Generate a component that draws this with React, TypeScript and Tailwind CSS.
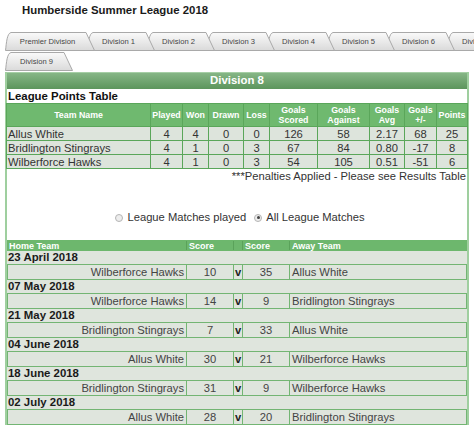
import React from "react";

const tabsTop = [
  { label: "Premier Division", w: 90, cls: "w-[90px] z-[9]" },
  { label: "Division 1", w: 68, cls: "w-[68px] -ml-[8px] z-[8]" },
  { label: "Division 2", w: 68, cls: "w-[68px] -ml-[8px] z-[7]" },
  { label: "Division 3", w: 68, cls: "w-[68px] -ml-[8px] z-[6]" },
  { label: "Division 4", w: 68, cls: "w-[68px] -ml-[8px] z-[5]" },
  { label: "Division 5", w: 68, cls: "w-[68px] -ml-[8px] z-[4]" },
  { label: "Division 6", w: 68, cls: "w-[68px] -ml-[8px] z-[3]" },
  { label: "Division 7", w: 68, cls: "w-[68px] -ml-[8px] z-[2]" },
];

const standings = [
  ["Allus White", 4, 4, 0, 0, 126, 58, "2.17", 68, 25],
  ["Bridlington Stingrays", 4, 1, 0, 3, 67, 84, "0.80", -17, 8],
  ["Wilberforce Hawks", 4, 1, 0, 3, 54, 105, "0.51", -51, 6],
];

const fixtures = [
  { date: "23 April 2018", home: "Wilberforce Hawks", hs: 10, as: 35, away: "Allus White" },
  { date: "07 May 2018", home: "Wilberforce Hawks", hs: 14, as: 9, away: "Bridlington Stingrays" },
  { date: "21 May 2018", home: "Bridlington Stingrays", hs: 7, as: 33, away: "Allus White" },
  { date: "04 June 2018", home: "Allus White", hs: 30, as: 21, away: "Wilberforce Hawks" },
  { date: "18 June 2018", home: "Bridlington Stingrays", hs: 31, as: 9, away: "Wilberforce Hawks" },
  { date: "02 July 2018", home: "Allus White", hs: 28, as: 20, away: "Bridlington Stingrays" },
];

const Tab = ({ label, w, cls, id }: { label: string; w: number; cls: string; id: string }) => (
  <div className={`relative shrink-0 h-[19px] flex items-center justify-center pr-[5px] ${cls}`}>
    <svg className="absolute left-0 top-0" width={w} height={19}>
      <defs>
        <linearGradient id={id} x1="0" y1="0" x2="0" y2="1">
          <stop offset="0" stopColor="#fafafa" />
          <stop offset="1" stopColor="#dadada" />
        </linearGradient>
      </defs>
      <path
        d={`M0.5,18.5 C1.5,10 2,1.5 6,0.5 L${w - 9},0.5 L${w - 0.5},18.5 Z`}
        fill={`url(#${id})`}
        stroke="#a9a9a9"
      />
    </svg>
    <span className="relative text-[7.6px] text-[#444] whitespace-nowrap">{label}</span>
  </div>
);

const th = "border border-[#5aa65a] px-0 font-bold text-white text-[8.8px] leading-[10px] text-center align-middle";
const td = "border border-[#5aa65a] h-[14px] p-0 leading-[12px] text-center";

export default function App() {
  return (
    <div className="w-[474px] h-[431px] overflow-hidden bg-white font-['Liberation_Sans',Arial,sans-serif] text-[#333]">
      <div className="h-[32px] pt-[4px] pl-[22px]">
        <h1 className="text-[11.4px] leading-[13px] font-bold text-[#1a1a1a]">Humberside Summer League 2018</h1>
      </div>

      {/* division tabs */}
      <div className="flex pl-[5px] overflow-hidden">
        {tabsTop.map((t, i) => (
          <Tab key={t.label} label={t.label} w={t.w} cls={t.cls} id={`tabg${i}`} />
        ))}
      </div>
      <div className="flex pl-[5px] mt-px">
        <Tab label="Division 9" w={68} cls="w-[68px]" id="tabg9" />
      </div>

      <div className="ml-[5px] w-[464px] border-x-2 border-[#9fcf9f] mt-[1px]">
        <div className="h-[17px] bg-linear-to-b from-[#86b686] to-[#5c955c] border-t border-[#a6cfa6] text-center text-white font-bold text-[11.4px] leading-[15px]">
          Division 8
        </div>

        <div className="h-[14px] pl-[1px] text-[11.4px] leading-[14px] font-bold text-[#111]">League Points Table</div>

        <table className="table-fixed border-collapse w-[461px] -ml-px text-[11.2px]">
          <colgroup>
            <col className="w-[144px]" />
            <col className="w-[32px]" />
            <col className="w-[26px]" />
            <col className="w-[35px]" />
            <col className="w-[26px]" />
            <col className="w-[48px]" />
            <col className="w-[52px]" />
            <col className="w-[35px]" />
            <col className="w-[32px]" />
            <col className="w-[31px]" />
          </colgroup>
          <thead>
            <tr className="h-[23px] bg-[#6fb96f]">
              <th className={th}>Team Name</th>
              <th className={th}>Played</th>
              <th className={th}>Won</th>
              <th className={th}>Drawn</th>
              <th className={th}>Loss</th>
              <th className={th}>Goals<br />Scored</th>
              <th className={th}>Goals<br />Against</th>
              <th className={th}>Goals<br />Avg</th>
              <th className={th}>Goals<br />+/-</th>
              <th className={th}>Points</th>
            </tr>
          </thead>
          <tbody>
            {standings.map((row) => (
              <tr key={row[0] as string} className="bg-[#dde4dc]">
                {row.map((c, j) => (
                  <td key={j} className={j === 0 ? `${td} !text-left pl-[1px]` : td}>
                    {c}
                  </td>
                ))}
              </tr>
            ))}
          </tbody>
        </table>

        <div className="h-[14px] text-right text-[11.2px] leading-[14px] pr-px">
          ***Penalties Applied - Please see Results Table
        </div>

        <div className="mt-[28px] h-[13px] flex items-center justify-center gap-[4px] text-[11.2px] leading-[13px] pl-[6px]">
          <span className="w-[8px] h-[8px] rounded-full border border-[#b5b5b5] bg-[#ededed]" />
          <span>League Matches played</span>
          <span className="ml-[4px] w-[8px] h-[8px] rounded-full border border-[#b5b5b5] bg-[#ededed] flex items-center justify-center">
            <span className="w-[3px] h-[3px] rounded-full bg-[#444]" />
          </span>
          <span>All League Matches</span>
        </div>

        <div className="mt-[16px] bg-[#dfe5dd]">
          <div className="flex h-[11px] bg-[#6db76d] text-white font-bold text-[9px] leading-[11px] border border-[#6db76d]">
            <div className="w-[178px] pl-px">Home Team</div>
            <div className="w-[47px] border-l border-[#5aa25a] pl-[2px]">Score</div>
            <div className="w-[9px] border-l border-[#5aa25a]" />
            <div className="w-[47px] border-l border-[#5aa25a] pl-[2px]">Score</div>
            <div className="flex-1 border-l border-[#5aa25a] pl-[2px]">Away Team</div>
          </div>
          {fixtures.map((f) => (
            <div key={f.date}>
              <div className="h-[13px] pl-px text-[11.4px] leading-[13px] font-bold text-[#1a1a1a]">{f.date}</div>
              <div className="flex h-[16px] text-[11.2px] leading-[14px] text-[#444] border border-[#73b573]">
                <div className="w-[178px] text-right pr-[2px]">{f.home}</div>
                <div className="w-[47px] border-l border-[#73b573] text-center">{f.hs}</div>
                <div className="w-[9px] border-l border-[#73b573] text-center font-bold text-[#222]">v</div>
                <div className="w-[47px] border-l border-[#73b573] text-center">{f.as}</div>
                <div className="flex-1 border-l border-[#73b573] pl-[2px]">{f.away}</div>
              </div>
            </div>
          ))}
        </div>
      </div>
    </div>
  );
}
